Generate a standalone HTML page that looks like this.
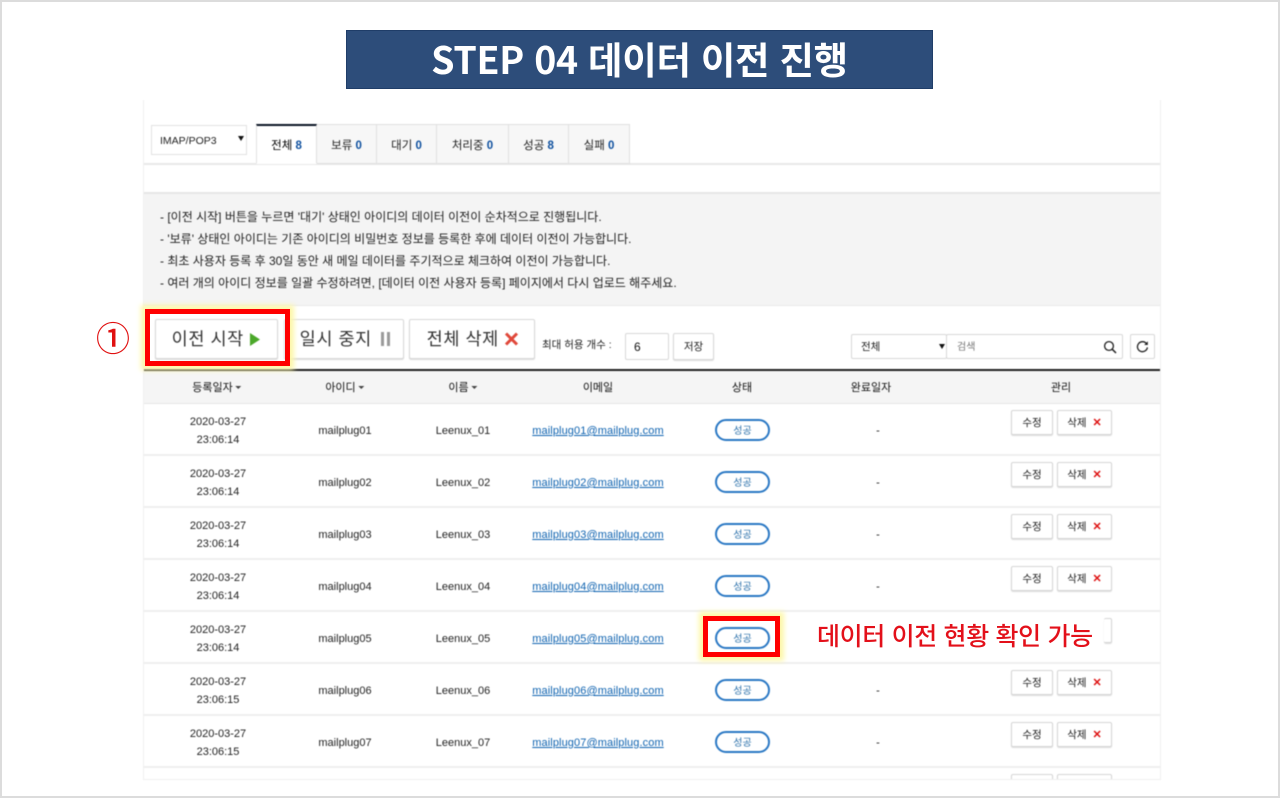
<!DOCTYPE html>
<html lang="ko"><head><meta charset="utf-8"><title>STEP 04 데이터 이전 진행</title>
<style>
html,body{margin:0;padding:0;background:#fff}
body{width:1280px;height:798px;position:relative;overflow:hidden;font-family:"Liberation Sans","Noto Sans CJK KR",sans-serif;color:#222}
.a{position:absolute;white-space:nowrap}
.frame{position:absolute;left:0;top:0;width:1276px;height:794px;border:2px solid #dcdcdc;z-index:9;pointer-events:none}
.title{left:346px;top:30px;width:587px;height:59px;background:#2d4d7a;color:#fff;font:700 37.5px/54px "Noto Sans CJK KR",sans-serif;text-align:center;letter-spacing:-.3px;box-sizing:border-box;border:1px solid #1f3d68;filter:blur(.3px)}
.wrap{position:absolute;left:143px;top:100px;width:1018px;height:680px;overflow:hidden;border:1px solid #f0f0f0;border-top:0;box-sizing:border-box;filter:blur(.4px);font-size:11px}
.wrap .in{position:absolute;left:-144px;top:-100px;width:1280px;height:798px}
.tab{position:absolute;top:124px;height:40px;box-sizing:border-box;background:#f7f7f7;border:1px solid #e0e0e0;border-left:0;text-align:center;line-height:42px;font-size:11.5px;color:#222}
.tab b{color:#0d4f9e;font-weight:bold}
.tab.on{background:#fff;border-top:2px solid #0c1525;border-bottom:1px solid #fff;color:#000;border-left:1px solid #e2e2e2;line-height:40px}
.notice{position:absolute;left:144px;top:192px;width:1018px;height:114px;background:#f4f4f4;border-top:2px solid #e6e6e6;border-bottom:1px solid #e8e8e8;box-sizing:border-box}
.nl{position:absolute;left:160px;font-size:12px;line-height:14px;color:#222;white-space:nowrap}
.btn{position:absolute;box-sizing:border-box;background:#fff;border:1px solid #d8d8d8;border-radius:2px;box-shadow:0 1px 1px #ddd;text-align:center;color:#222}
.big{top:319px;height:40px;font-size:17.5px;line-height:39px;letter-spacing:.6px;color:#333}
.hd{position:absolute;left:144px;top:370px;width:1018px;height:34px;background:#f5f5f5;border-bottom:1px solid #e6e6e6;box-sizing:border-box}
.th{position:absolute;top:381px;font-size:11px;line-height:14px;color:#111;transform:translateX(-50%);white-space:nowrap}
.car{display:inline-block;width:0;height:0;border:3px solid transparent;border-top:3px solid #444;border-bottom:0;vertical-align:2px;margin-left:3px}
.r{position:absolute;left:144px;width:1018px;height:52px;border-bottom:2px solid #eeeeee;box-sizing:border-box}
.c{position:absolute;transform:translateX(-50%);white-space:nowrap;font-size:11px;color:#222;line-height:18px;text-align:center}
.c.m{top:18px}
.c.d{top:9px}
.c.e{top:18px;color:#0f63b0;text-decoration:underline;left:454px;letter-spacing:.1px}
.pill{position:absolute;left:571px;top:15px;width:55px;height:22px;box-sizing:border-box;border:2px solid #2a78c4;border-radius:11px;background:#fff;text-align:center;font-size:10px;line-height:21px;color:#2a70aa}
.b1,.b2{position:absolute;top:6px;height:25px;box-sizing:border-box;background:#fff;border:1px solid #d6d6d6;border-radius:2px;box-shadow:0 1px 1px #ddd;text-align:center;font-size:10.5px;line-height:24px;color:#222;white-space:nowrap}
.b1{left:867px;width:42px}
.b2{left:913px;width:55px}
.b2 i{font-style:normal;font-weight:bold;color:#d11;margin-left:6px;font-size:11px}
.redbox{position:absolute;box-sizing:border-box;border:5px solid #f00;box-shadow:0 0 5px 4px #fdf7a8;z-index:5}
</style></head><body>
<div class="frame"></div>
<div class="a title">STEP 04 데이터 이전 진행</div>

<div class="wrap"><div class="in">
  <div class="btn" style="left:151px;top:125px;width:96px;height:30px;box-shadow:none;border-color:#e2e2e2;text-align:left;padding-left:8px;line-height:31px;font-size:10.5px;border-radius:0">IMAP/POP3<span class="a" style="left:86px;top:10px;width:0;height:0;border:3px solid transparent;border-top:5px solid #111;border-bottom:0"></span></div>
  <div class="a" style="left:144px;top:163px;width:1018px;height:2px;background:#e8e8e8"></div>
  <div class="tab" style="left:317px;width:60px">보류 <b>0</b></div>
  <div class="tab" style="left:377px;width:60px">대기 <b>0</b></div>
  <div class="tab" style="left:437px;width:72px">처리중 <b>0</b></div>
  <div class="tab" style="left:509px;width:60px">성공 <b>8</b></div>
  <div class="tab" style="left:569px;width:61px">실패 <b>0</b></div>
  <div class="tab on" style="left:256px;width:61px">전체 <b>8</b></div>

  <div class="notice"></div>
  <div class="nl" style="top:210px">- [이전 시작] 버튼을 누르면 '대기' 상태인 아이디의 데이터 이전이 순차적으로 진행됩니다.</div>
  <div class="nl" style="top:232px">- '보류' 상태인 아이디는 기존 아이디의 비밀번호 정보를 등록한 후에 데이터 이전이 가능합니다.</div>
  <div class="nl" style="top:254px">- 최초 사용자 등록 후 30일 동안 새 메일 데이터를 주기적으로 체크하여 이전이 가능합니다.</div>
  <div class="nl" style="top:276px">- 여러 개의 아이디 정보를 일괄 수정하려면, [데이터 이전 사용자 등록] 페이지에서 다시 업로드 해주세요.</div>

  <div class="btn big" style="left:155px;width:123px">이전 시작 <svg width="12" height="15" viewBox="0 0 12 15" style="vertical-align:-2px"><path d="M1 1L11 7.5L1 14Z" fill="#4ba82a"/></svg></div>
  <div class="btn big" style="left:284px;width:120px;padding-left:3px">일시 중지 <svg width="11" height="14" viewBox="0 0 11 14" style="vertical-align:-1px;margin-left:3px"><path d="M1 0h3v14H1zM7 0h3v14H7z" fill="#9a9a9a"/></svg></div>
  <div class="btn big" style="left:409px;width:126px;padding-left:2px">전체 삭제 <svg width="15" height="14" viewBox="0 0 15 14" style="vertical-align:-1px"><path d="M2 1.5L13 12.5M13 1.5L2 12.5" stroke="#e0483a" stroke-width="3" fill="none"/></svg></div>
  <div class="a" style="left:542px;top:338px;font-size:10.5px;line-height:14px;color:#222">최대 허용 개수 :</div>
  <div class="btn" style="left:625px;top:333px;width:44px;height:27px;text-align:left;padding-left:8px;line-height:27px;font-size:12px;box-shadow:none;color:#111">6</div>
  <div class="btn" style="left:673px;top:333px;width:41px;height:27px;line-height:27px;font-size:10.5px">저장</div>
  <div class="btn" style="left:851px;top:334px;width:96px;height:25px;text-align:left;padding-left:9px;line-height:25px;font-size:10.5px;box-shadow:none;color:#222">전체<span class="a" style="left:87px;top:9px;width:0;height:0;border:3px solid transparent;border-top:5px solid #111;border-bottom:0"></span></div>
  <div class="btn" style="left:946px;top:334px;width:177px;height:25px;text-align:left;padding-left:10px;line-height:25px;font-size:10px;box-shadow:none;color:#777">검색<svg class="a" style="left:156px;top:5px" width="14" height="14" viewBox="0 0 14 14"><circle cx="6" cy="6" r="4.4" stroke="#222" stroke-width="1.3" fill="none"/><path d="M9.3 9.3L13 13" stroke="#222" stroke-width="1.5"/></svg></div>
  <div class="btn" style="left:1130px;top:334px;width:25px;height:25px;box-shadow:none"><svg class="a" style="left:5px;top:5px" width="13" height="13" viewBox="0 0 13 13"><path d="M10.8 4.2A5 5 0 1 0 11.4 7.4" stroke="#222" stroke-width="1.3" fill="none"/><path d="M11.8 1.2V5H8.2Z" fill="#222"/></svg></div>

  <div class="a" style="left:144px;top:369px;width:1018px;height:1.5px;background:#222"></div>
  <div class="hd" style="top:371px;height:33px"></div>
  <div class="th" style="left:217px">등록일자<span class="car"></span></div>
  <div class="th" style="left:345px">아이디<span class="car"></span></div>
  <div class="th" style="left:463px">이름<span class="car"></span></div>
  <div class="th" style="left:598px">이메일</div>
  <div class="th" style="left:742px">상태</div>
  <div class="th" style="left:871px">완료일자</div>
  <div class="th" style="left:1061px">관리</div>

  <div class="r" style="top:404px"><div class="c d" style="left:74px">2020-03-27<br>23:06:14</div><div class="c m" style="left:201px">mailplug01</div><div class="c m" style="left:319px">Leenux_01</div><div class="c e">mailplug01@mailplug.com</div><div class="pill">성공</div><div class="c m" style="left:734px">-</div><div class="b1">수정</div><div class="b2">삭제<i>✕</i></div></div>
  <div class="r" style="top:456px"><div class="c d" style="left:74px">2020-03-27<br>23:06:14</div><div class="c m" style="left:201px">mailplug02</div><div class="c m" style="left:319px">Leenux_02</div><div class="c e">mailplug02@mailplug.com</div><div class="pill">성공</div><div class="c m" style="left:734px">-</div><div class="b1">수정</div><div class="b2">삭제<i>✕</i></div></div>
  <div class="r" style="top:508px"><div class="c d" style="left:74px">2020-03-27<br>23:06:14</div><div class="c m" style="left:201px">mailplug03</div><div class="c m" style="left:319px">Leenux_03</div><div class="c e">mailplug03@mailplug.com</div><div class="pill">성공</div><div class="c m" style="left:734px">-</div><div class="b1">수정</div><div class="b2">삭제<i>✕</i></div></div>
  <div class="r" style="top:560px"><div class="c d" style="left:74px">2020-03-27<br>23:06:14</div><div class="c m" style="left:201px">mailplug04</div><div class="c m" style="left:319px">Leenux_04</div><div class="c e">mailplug04@mailplug.com</div><div class="pill">성공</div><div class="c m" style="left:734px">-</div><div class="b1">수정</div><div class="b2">삭제<i>✕</i></div></div>
  <div class="r" style="top:612px"><div class="c d" style="left:74px">2020-03-27<br>23:06:14</div><div class="c m" style="left:201px">mailplug05</div><div class="c m" style="left:319px">Leenux_05</div><div class="c e">mailplug05@mailplug.com</div><div class="pill">성공</div><div class="b2" style="border-left:0;left:960px;width:8px"></div></div>
  <div class="r" style="top:664px"><div class="c d" style="left:74px">2020-03-27<br>23:06:15</div><div class="c m" style="left:201px">mailplug06</div><div class="c m" style="left:319px">Leenux_06</div><div class="c e">mailplug06@mailplug.com</div><div class="pill">성공</div><div class="c m" style="left:734px">-</div><div class="b1">수정</div><div class="b2">삭제<i>✕</i></div></div>
  <div class="r" style="top:716px"><div class="c d" style="left:74px">2020-03-27<br>23:06:15</div><div class="c m" style="left:201px">mailplug07</div><div class="c m" style="left:319px">Leenux_07</div><div class="c e">mailplug07@mailplug.com</div><div class="pill">성공</div><div class="c m" style="left:734px">-</div><div class="b1">수정</div><div class="b2">삭제<i>✕</i></div></div>
  <div class="r" style="top:768px;border:0"><div class="b1"></div><div class="b2"></div></div>
</div></div>

<div class="a" style="left:96px;top:314px;width:34px;height:46px;text-align:center;color:#e01010;font:500 34px/46px 'Noto Sans CJK KR',sans-serif">①</div>
<div class="redbox" style="left:145px;top:309px;width:145px;height:57px"></div>
<div class="redbox" style="left:703px;top:616px;width:77px;height:41px"></div>
<div class="a" style="left:817px;top:617px;font:500 25px/36px 'Noto Sans CJK KR',sans-serif;color:#e3101a;z-index:6;letter-spacing:-.35px">데이터 이전 현황 확인 가능</div>
</body></html>
